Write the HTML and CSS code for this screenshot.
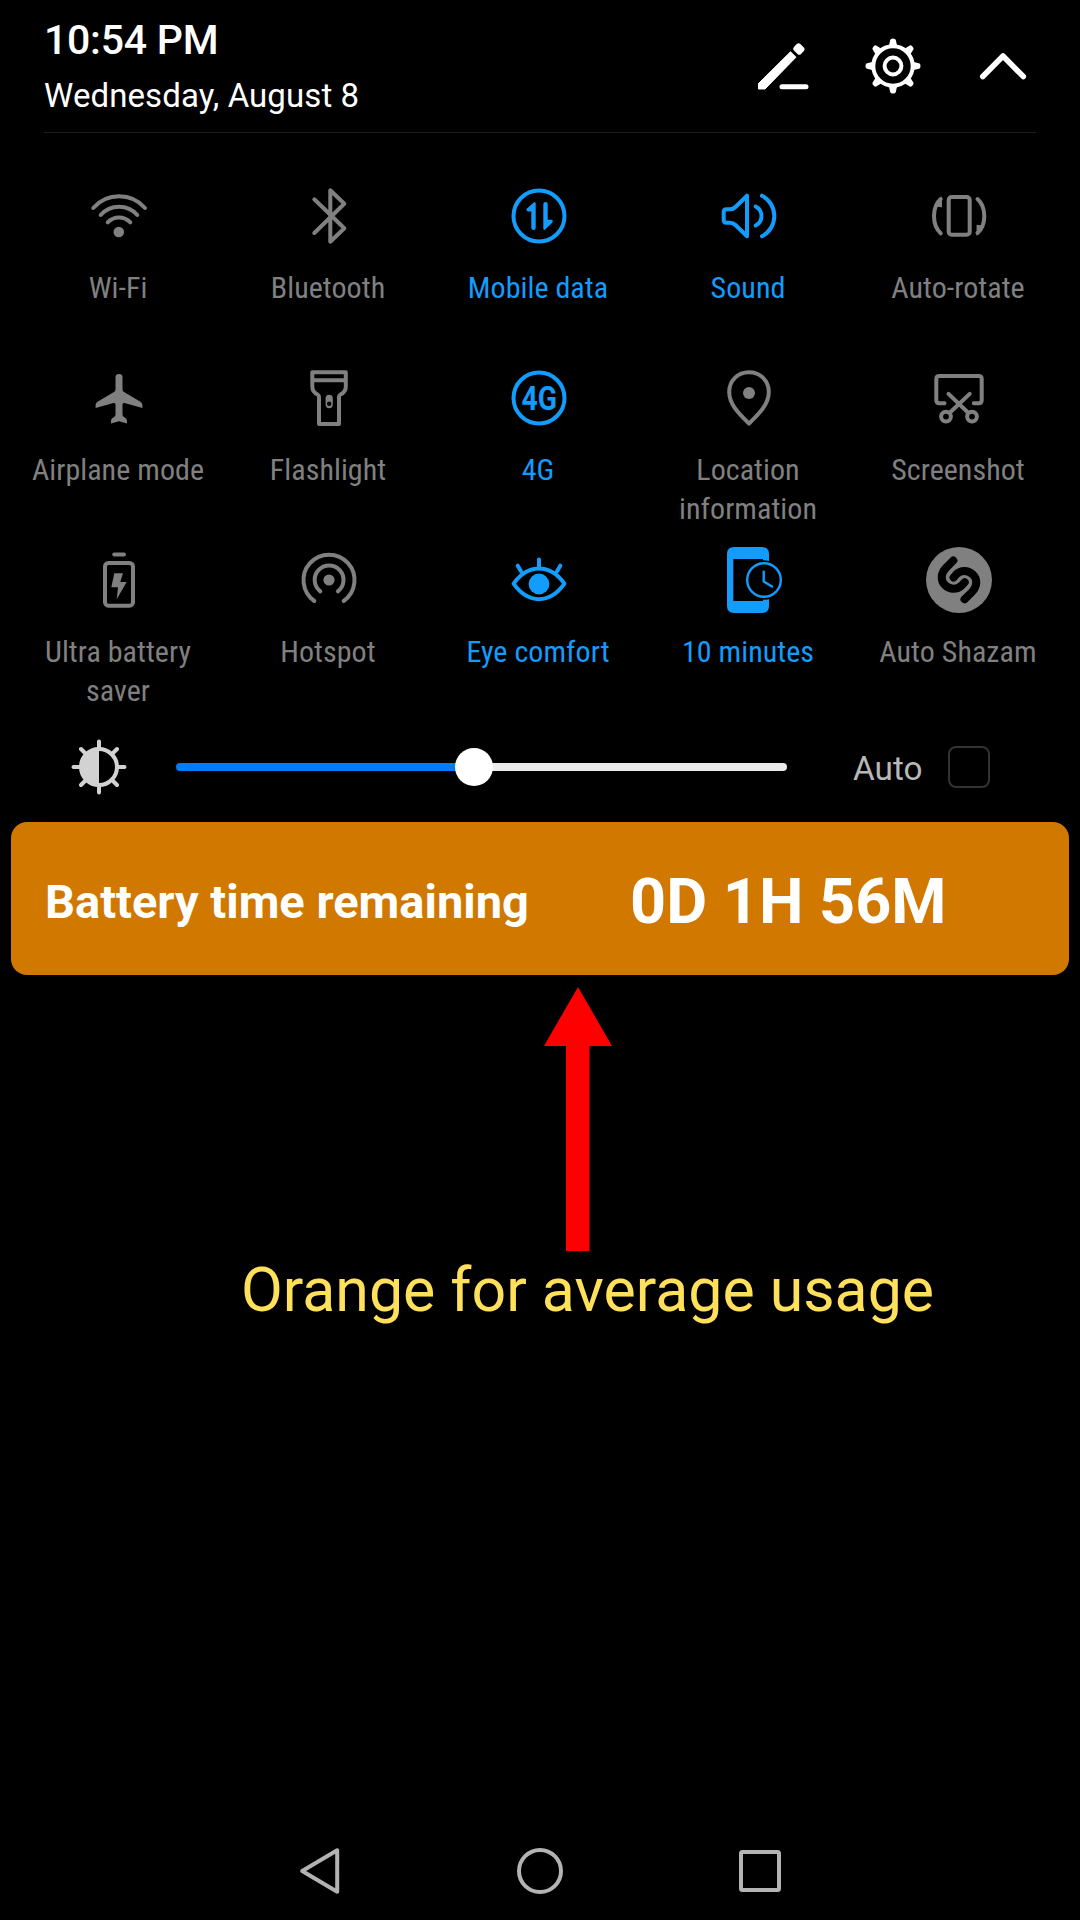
FILE: index.html
```html
<!DOCTYPE html>
<html lang="en">
<head>
<meta charset="utf-8">
<title>Quick settings</title>
<link rel="stylesheet" href="styles.css">
</head>
<body>
<div class="screen">
  <header class="header">
    <div class="clock">
      <div class="time">10:54 PM</div>
      <div class="date">Wednesday, August 8</div>
    </div>
    <div class="actions">
      <svg class="action" viewBox="0 0 60 60"><path d="M5.500 53V47.500L37.500 15.800L43 21.200L12 53Z" fill="#fff" stroke="#fff" stroke-width="1" stroke-linejoin="round"/><rect x="40.900" y="8.500" width="10" height="9" rx="2.500" fill="#fff" transform="rotate(45 45.900 13)"/><path d="M29 50.800H53" class="line thick"/></svg>
      <svg class="action" viewBox="0 0 60 60"><g fill="#fff"><path id="tooth" d="M25.500 11.500L27.200 4Q27.500 2.500 30 2.500Q32.500 2.500 32.800 4L34.500 11.500Z"/><use href="#tooth" transform="rotate(45 30 30)"/><use href="#tooth" transform="rotate(90 30 30)"/><use href="#tooth" transform="rotate(135 30 30)"/><use href="#tooth" transform="rotate(180 30 30)"/><use href="#tooth" transform="rotate(225 30 30)"/><use href="#tooth" transform="rotate(270 30 30)"/><use href="#tooth" transform="rotate(315 30 30)"/></g><circle cx="30" cy="30" r="19.7" class="line"/><circle cx="30" cy="30" r="8.4" class="line"/></svg>
      <svg class="action" viewBox="0 0 60 60"><path d="M9.8 40.5L30 20L50.3 40.5" class="line chevron"/></svg>
    </div>
  </header>

  <main>
    <section class="tiles">
      <div class="tile">
        <svg class="icon" viewBox="0 0 66 66"><path d="M7.3 25A34.5 34.5 0 0 1 59 25M14.7 32A24.5 24.5 0 0 1 51.3 32M21.7 39.3A15.5 15.5 0 0 1 44.3 39.3"/><circle class="solid" cx="32.8" cy="49" r="5.3"/></svg>
        <span class="label">Wi-Fi</span>
      </div>
      <div class="tile">
        <svg class="icon" viewBox="0 0 66 66"><path d="M18.3 16.3L48.3 45.3L34.3 58.7V7.3L48.3 20.7L18.3 50"/></svg>
        <span class="label">Bluetooth</span>
      </div>
      <div class="tile on">
        <svg class="icon" viewBox="0 0 66 66"><circle cx="33" cy="33" r="25.5"/><path class="solid" d="M28.3 19Q29.7 19 29.7 20.5V45Q29.7 47 27.5 47Q25.3 47 25.3 45V28.6H22.5Q20 28.2 20.5 26ZM38.7 47Q37.3 47 37.3 45.5V21Q37.3 19 39.5 19Q41.7 19 41.7 21V36.8H45.5Q47.5 37.3 46.4 39.4Z"/></svg>
        <span class="label">Mobile data</span>
      </div>
      <div class="tile on">
        <svg class="icon" viewBox="0 0 66 66"><path d="M31 12.7V53.3L19.5 42Q17.3 39.7 14 39.7H10.5Q7.7 39.7 7.7 37V29Q7.7 26.3 10.5 26.3H14Q17.3 26.3 19.5 24ZM39.7 23.5A10.7 10.7 0 0 1 39.7 42.5M46 12.7A22.9 22.9 0 0 1 46 53.3"/></svg>
        <span class="label">Sound</span>
      </div>
      <div class="tile">
        <svg class="icon" viewBox="0 0 66 66"><rect x="22.7" y="14" width="21" height="37.7" rx="3"/><path d="M14.7 50.3Q8 44 8 33Q8 22 14.7 16M51.5 16Q58.3 22 58.3 33Q58.3 44 51.5 50"/><path class="solid" d="M16 13.3V24.3L11 23.8L10 20ZM50.6 53V41.7L55.6 42.2L56.6 46Z"/></svg>
        <span class="label">Auto-rotate</span>
      </div>

      <div class="tile">
        <svg class="icon" viewBox="0 0 66 66"><path class="solid" d="M29.5 12Q29.5 9 33 9Q36.5 9 36.5 12V24.5Q36.5 26 38 27L54.5 36.8Q56.4 38 56.4 40V43L38.5 38Q36.5 37.6 36.5 39.5V49.5Q36.5 51 38 52L39.5 53Q41 54 41 56V58.4L33 56.2L25 58.4V56Q25 54 26.5 53L28 52Q29.5 51 29.5 49.5V39.5Q29.5 37.6 27.5 38L9.6 43V40Q9.6 38 11.5 36.8L28 27Q29.5 26 29.5 24.5Z"/></svg>
        <span class="label">Airplane mode</span>
      </div>
      <div class="tile">
        <svg class="icon" viewBox="0 0 66 66"><path d="M16.3 7.3H49.8V21.5Q49.8 27 44.5 29.5Q43 30.3 43 32V59H23V32Q23 30.3 21.5 29.5Q16.3 27 16.3 21.5ZM16.3 15.2H49.8"/><path class="solid" fill-rule="evenodd" d="M33.2 29.7Q36.8 29.7 36.8 33.2V39.6Q36.8 43.2 33.2 43.2Q29.6 43.2 29.6 39.6V33.2Q29.6 29.7 33.2 29.7ZM33.2 36.4A2.2 2.3 0 1 0 33.2 41A2.2 2.3 0 1 0 33.2 36.4Z"/></svg>
        <span class="label">Flashlight</span>
      </div>
      <div class="tile on">
        <svg class="icon" viewBox="0 0 66 66"><circle cx="33" cy="33" r="25.5"/><text class="badge-text" x="15.5" y="44.6" textLength="35.5" lengthAdjust="spacingAndGlyphs">4G</text></svg>
        <span class="label">4G</span>
      </div>
      <div class="tile">
        <svg class="icon" viewBox="0 0 66 66"><path d="M33 7.3C44.3 7.3 52.8 15.5 52.8 27C52.8 40 42 49.5 33 58.6C24 49.5 13.2 40 13.2 27C13.2 15.5 21.7 7.3 33 7.3Z"/><circle class="solid" cx="33" cy="28" r="6"/></svg>
        <span class="label">Location<br>information</span>
      </div>
      <div class="tile">
        <svg class="icon" viewBox="0 0 66 66"><path d="M18.5 38.3H13.3Q10.3 38.3 10.3 35.3V14Q10.3 11 13.3 11H52.7Q55.7 11 55.7 14V35.3Q55.7 38.3 52.7 38.3H47.8M22.5 28.9L41.7 47.3M43.7 28.9L24.3 47.3"/><circle cx="20" cy="51.6" r="4.9"/><circle cx="46" cy="51.6" r="4.9"/></svg>
        <span class="label">Screenshot</span>
      </div>

      <div class="tile">
        <svg class="icon" viewBox="0 0 66 66"><path d="M28.3 7.5H38"/><rect x="19" y="16" width="28" height="42.7" rx="3.5"/><path class="solid" d="M28.3 26.3H37L34.3 35H40.7L30.7 52.3L32 40.3H25.3Z"/></svg>
        <span class="label">Ultra battery<br>saver</span>
      </div>
      <div class="tile">
        <svg class="icon" viewBox="0 0 66 66"><path d="M18.3 54A25.5 25.5 0 1 1 47.7 54M24.3 44.3A14.4 14.4 0 1 1 41.9 44.3"/><circle class="solid" cx="33" cy="33" r="5.6"/></svg>
        <span class="label">Hotspot</span>
      </div>
      <div class="tile on">
        <svg class="icon" viewBox="0 0 66 66"><path d="M7.6 36.7Q18.5 21.6 33 21.6Q47.5 21.6 58.4 36.7Q47.5 52.2 33 52.2Q18.5 52.2 7.6 36.7ZM33 12.5V20M11.7 18.7L15 24.2M54.3 18.7L51 24.2"/><circle class="solid" cx="33" cy="37" r="10.4"/></svg>
        <span class="label">Eye comfort</span>
      </div>
      <div class="tile on">
        <svg class="icon" viewBox="0 0 66 66"><path class="solid" fill-rule="evenodd" d="M18 0H46Q53 0 53 7V59Q53 66 46 66H18Q11 66 11 59V7Q11 0 18 0ZM17.3 12V54H47V12Z"/><circle class="cutout" cx="48" cy="33" r="19.7"/><circle class="thin" cx="48" cy="33" r="16.8"/><path class="thin" d="M47.7 24.6V34.5L56 39.6"/></svg>
        <span class="label">10 minutes</span>
      </div>
      <div class="tile">
        <svg class="icon" viewBox="0 0 66 66"><circle class="solid" cx="33" cy="33" r="33"/><path class="swirl" d="M27.3 13.5L20 20.8C14.6 26.2 14.4 33.8 19 38.2C23.8 43 31.2 43 35.8 38.4L38.7 35.2M38.5 52.3L46 45C51.4 39.6 51.6 32 47 27.6C42.2 22.8 34.8 22.8 30.2 27.4L27.6 30.6"/></svg>
        <span class="label">Auto Shazam</span>
      </div>
    </section>

    <section class="brightness">
      <svg class="sun" viewBox="0 0 60 60"><circle cx="30" cy="30" r="18"/><path d="M30 4.5V12M30 48V55.5M4.5 30H12M48 30H55.5M12 12L17 17M43 43L48 48M48 12L43 17M17 43L12 48"/><path class="half" d="M30 12A18 18 0 0 0 30 48Z"/></svg>
      <div class="slider"><div class="filled"></div><div class="thumb"></div><div class="rest"></div></div>
      <span class="auto">Auto</span>
      <span class="checkbox"></span>
    </section>

    <section class="battery">
      <span class="battery-title">Battery time remaining</span>
      <span class="battery-value">0D 1H 56M</span>
    </section>

    <section class="note">
      <svg class="arrow" viewBox="0 0 68 264"><path d="M34 0L68 59H45.5V264H22V59H0Z" fill="#f00"/></svg>
      <p class="caption">Orange for average usage</p>
    </section>
  </main>

  <nav class="nav">
    <svg class="nav-icon" viewBox="0 0 50 50"><path d="M7.2 25L42.2 4.3V45.7Z"/></svg>
    <svg class="nav-icon" viewBox="0 0 50 50"><circle cx="25" cy="25" r="21"/></svg>
    <svg class="nav-icon" viewBox="0 0 50 50"><rect x="6" y="6" width="38" height="38" rx="1.5"/></svg>
  </nav>
</div>
</body>
</html>
```
FILE: styles.css
```css
* { box-sizing: border-box; }

body {
  margin: 0;
  background: #000;
  color: #fff;
  font-family: Roboto, "Liberation Sans", sans-serif;
}

.screen {
  width: 1080px;
  height: 1920px;
  display: flex;
  flex-direction: column;
  overflow: hidden;
}

/* Header */
.header {
  display: flex;
  justify-content: space-between;
  height: 133px;
  margin: 0 44px;
  padding-top: 15px;
  border-bottom: 1px solid #1d1d1d;
}

.time {
  font-size: 41px;
  line-height: 50px;
  font-weight: 500;
  letter-spacing: -0.25px;
}

.date {
  margin-top: 11px;
  font-size: 33px;
  line-height: 40px;
  letter-spacing: 0.1px;
}

.actions {
  display: flex;
  gap: 50px;
  padding-top: 21px;
  margin-right: 3px;
}

.action {
  width: 60px;
  height: 60px;
}

.line {
  fill: none;
  stroke: #fff;
  stroke-width: 4;
  stroke-linecap: round;
  stroke-linejoin: round;
}

.line.thick { stroke-width: 5; }
.line.chevron { stroke-width: 5.6; }

/* Tiles */
.tiles {
  display: grid;
  grid-template-columns: repeat(5, 210px);
  grid-template-rows: repeat(3, 182px);
  margin: 50px 0 0 13px;
}

.tile {
  display: flex;
  flex-direction: column;
  align-items: center;
  gap: 19px;
  color: #808080;
}

.tile.on { color: #129cfc; }

.icon {
  width: 66px;
  height: 66px;
  margin-left: 2px;
  fill: none;
  stroke: currentColor;
  stroke-width: 4;
  stroke-linecap: round;
  stroke-linejoin: round;
}

.icon .solid { fill: currentColor; stroke: none; }
.icon .cutout { fill: #000; stroke: none; }
.icon .thin { stroke-width: 2.4; }
.icon .swirl { stroke: #000; stroke-width: 8; }

.badge-text {
  fill: currentColor;
  stroke: none;
  font-size: 33px;
  font-weight: 700;
}

.label {
  font-family: "Roboto Condensed", Roboto, sans-serif;
  font-stretch: 75%;
  font-size: 30px;
  line-height: 39px;
  letter-spacing: 0.05px;
  text-align: center;
  white-space: nowrap;
}

/* Brightness */
.brightness {
  display: flex;
  align-items: center;
  height: 60px;
  margin-top: 8px;
  padding-left: 69px;
}

.sun {
  width: 60px;
  height: 60px;
  fill: none;
  stroke: #d2d2d2;
  stroke-width: 4;
  stroke-linecap: round;
}

.sun .half { fill: #d2d2d2; stroke: none; }

.slider {
  display: flex;
  align-items: center;
  width: 611px;
  margin-left: 47px;
}

.filled {
  width: 298px;
  height: 8px;
  border-radius: 4px 0 0 4px;
  background: #007bfa;
}

.thumb {
  width: 38px;
  height: 38px;
  margin: 0 -19px;
  border-radius: 50%;
  background: #fff;
  z-index: 1;
}

.rest {
  flex: 1;
  height: 8px;
  border-radius: 0 4px 4px 0;
  background: #ebebeb;
}

.auto {
  width: 95px;
  margin-left: 66px;
  padding-top: 4px;
  font-size: 33.3px;
  line-height: 40px;
  color: #b8b8b8;
}

.checkbox {
  width: 42px;
  height: 42px;
  border: 2px solid #333;
  border-radius: 8px;
}

/* Battery banner */
.battery {
  display: flex;
  align-items: flex-start;
  height: 153px;
  margin: 25px 11px 0;
  padding: 42px 34px 0;
  border-radius: 16px;
  background: #d07800;
  font-weight: 700;
  line-height: 76px;
  white-space: nowrap;
}

.battery-title {
  width: 585px;
  font-size: 47px;
}

.battery-value { font-size: 63px; }

/* Annotation */
.arrow {
  display: block;
  width: 68px;
  height: 264px;
  margin: 12px 0 0 544px;
}

.caption {
  margin: 4px 0 0 241px;
  font-size: 60.8px;
  line-height: 72px;
  color: #ffe05a;
  white-space: nowrap;
}

/* Navigation bar */
.nav {
  display: flex;
  justify-content: center;
  gap: 170px;
  margin-top: auto;
  padding-bottom: 24px;
}

.nav-icon {
  width: 50px;
  height: 50px;
  fill: none;
  stroke: #b3b3b3;
  stroke-width: 4;
  stroke-linejoin: round;
}
```
